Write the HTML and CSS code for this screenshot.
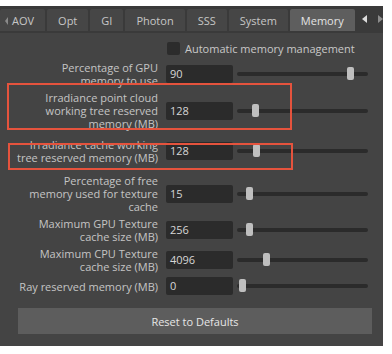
FILE: index.html
```html
<!DOCTYPE html>
<html lang="en">
<head>
  <meta charset="UTF-8">
  <title>Memory settings</title>
  <link rel="stylesheet" href="styles.css">
</head>
<body>
  <div class="panel">
    <div class="tabs">
      <div class="tab first"><span class="edge"></span>AOV</div>
      <div class="tab">Opt</div>
      <div class="tab">GI</div>
      <div class="tab">Photon</div>
      <div class="tab">SSS</div>
      <div class="tab">System</div>
      <div class="tab active">Memory</div>
      <div class="scroll">
        <span class="arrow left"></span>
        <span class="arrow right"></span>
      </div>
    </div>

    <div class="content">
      <div class="auto">
        <span class="box"></span>
        <span>Automatic memory management</span>
      </div>

      <div class="row">
        <div class="label">Percentage of GPU<br>memory to use</div>
        <div class="field">90</div>
        <div class="slider"><span class="thumb" style="left: 110px"></span></div>
      </div>

      <div class="row">
        <div class="label">Irradiance point cloud<br>working tree reserved<br>memory (MB)</div>
        <div class="field">128</div>
        <div class="slider"><span class="thumb" style="left: 15px"></span></div>
      </div>

      <div class="row wide">
        <div class="label">Irradiance cache working<br>tree reserved memory (MB)</div>
        <div class="field">128</div>
        <div class="slider"><span class="thumb" style="left: 16px"></span></div>
      </div>

      <div class="row wider">
        <div class="label">Percentage of free<br>memory used for texture<br>cache</div>
        <div class="field">15</div>
        <div class="slider"><span class="thumb" style="left: 9px"></span></div>
      </div>

      <div class="row">
        <div class="label">Maximum GPU Texture<br>cache size (MB)</div>
        <div class="field">256</div>
        <div class="slider"><span class="thumb" style="left: 9px"></span></div>
      </div>

      <div class="row">
        <div class="label">Maximum CPU Texture<br>cache size (MB)</div>
        <div class="field">4096</div>
        <div class="slider"><span class="thumb" style="left: 26px"></span></div>
      </div>

      <div class="row">
        <div class="label">Ray reserved memory (MB)</div>
        <div class="field">0</div>
        <div class="slider"><span class="thumb" style="left: 2px"></span></div>
      </div>

      <button class="reset">Reset to Defaults</button>
    </div>
  </div>

  <!-- annotation boxes drawn over the panel -->
  <div class="mark mark-one"></div>
  <div class="mark mark-two"></div>
</body>
</html>
```

FILE: styles.css
```css
body {
  margin: 0;
  background: #fff;
  font-family: 'Open Sans', 'DejaVu Sans', sans-serif;
  font-size: 11px;
  position: relative;
}
.panel {
  margin-top: 6px;
  width: 383px;
  height: 340px;
  background: #444;
}
.tabs {
  display: flex;
  align-items: flex-end;
  gap: 2px;
  height: 25px;
  background: #3a3a3a;
}
.tab {
  height: 22px;
  line-height: 23px;
  padding: 0 11px;
  background: #464646;
  color: #c6c6c6;
  border-radius: 2px 2px 0 0;
  position: relative;
}
.tab.first {
  padding-left: 12px;
}
.tab .edge {
  position: absolute;
  left: 5px;
  top: 8px;
  border-right: 3px solid #8a8a8a;
  border-top: 4px solid transparent;
  border-bottom: 4px solid transparent;
}
.tab.active {
  padding: 0 11px;
  background: #5e5e5e;
  color: #e4e4e4;
}
.scroll {
  display: flex;
  align-items: center;
  gap: 11px;
  height: 25px;
  padding-left: 5px;
}
.arrow {
  border-top: 4px solid transparent;
  border-bottom: 4px solid transparent;
}
.arrow.left {
  border-right: 5px solid #dcdcdc;
}
.arrow.right {
  border-left: 5px solid #8c8c8c;
}
.content {
  border-top: 2px solid #3a3a3a;
  padding: 9px 0 0 8px;
}
.auto {
  display: flex;
  align-items: center;
  height: 13px;
  margin-left: 159px;
  color: #c8c8c8;
}
.box {
  width: 13px;
  height: 13px;
  background: #2c2c2c;
  border-radius: 2px;
  margin-right: 5px;
}
.row {
  display: grid;
  grid-template-columns: 150px 75px 135px;
  align-items: center;
  margin-top: 4px;
}
.auto + .row {
  margin-top: 6px;
}
.row.wide {
  margin-top: 8px;
}
.row.wider {
  margin-top: 10px;
}
.label {
  text-align: right;
  line-height: 13px;
  color: #c4c4c4;
  white-space: nowrap;
}
.field {
  margin-left: 8px;
  height: 18px;
  line-height: 18px;
  padding-left: 4px;
  background: #2b2b2b;
  border-radius: 2px;
  color: #d6d6d6;
}
.slider {
  margin-left: 4px;
  height: 18px;
  position: relative;
}
.slider::before {
  content: '';
  position: absolute;
  left: 0;
  right: 0;
  top: 7px;
  height: 4px;
  border-radius: 2px;
  background: #2b2b2b;
}
.thumb {
  position: absolute;
  top: 2px;
  width: 7px;
  height: 13px;
  border-radius: 2px;
  background: #bfbfbf;
}
.reset {
  display: block;
  margin: 13px 0 0 10px;
  width: 354px;
  height: 26px;
  border: none;
  background: #5d5d5d;
  color: #e6e6e6;
  font-family: inherit;
  font-size: 11px;
}
.mark {
  position: absolute;
  border: 2px solid #e5533d;
}
.mark-one {
  left: 7px;
  top: 83px;
  width: 281px;
  height: 43px;
}
.mark-two {
  left: 8px;
  top: 143px;
  width: 281px;
  height: 23px;
}
```
